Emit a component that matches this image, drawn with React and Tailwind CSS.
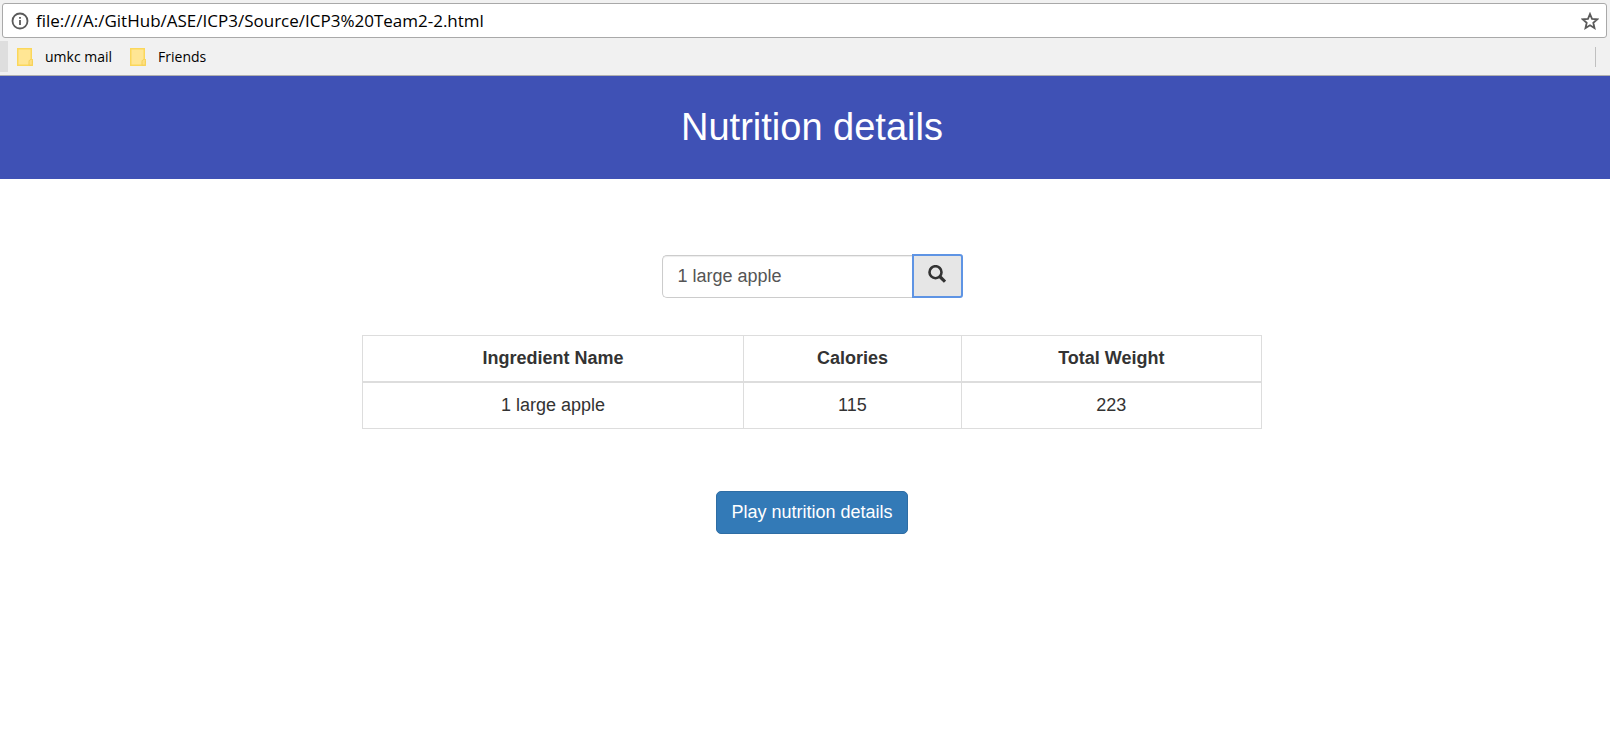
import { useState } from "react";

const rows = [{ name: "1 large apple", calories: 115, weight: 223 }];

function FolderIcon() {
  return (
    <svg className="h-[18px] w-4 shrink-0" viewBox="0 0 16 18" aria-hidden="true">
      <path d="M.75.75h13.500v11h1v5.500H.75z" fill="#ffe694" stroke="#fbd75b" strokeWidth="1.500" />
      <path d="M14.500 11.500c-1.500 0-2.500.8-2.500 2.200v3.500h2c1 0 1.300-.5 1.300-1.500v-3" fill="#ffe082" stroke="#f3cf58" />
    </svg>
  );
}

function BrowserBar() {
  return (
    <div className="border-b border-[#b0b0b0] bg-[#f1f1f1] text-black">
      <div className="px-0.5 pt-[3px]">
        <div className="mr-px flex h-[35px] items-center rounded-[3px] border border-[#a9a9a9] bg-white pr-[7px] pl-2">
          <svg className="size-[18px] shrink-0" viewBox="0 0 18 18" aria-hidden="true">
            <circle cx="9" cy="9" r="7.500" fill="none" stroke="#5a5a5a" strokeWidth="1.800" />
            <path d="M9 8v5M9 5v1.800" stroke="#5a5a5a" strokeWidth="1.800" />
          </svg>
          <input
            aria-label="Address"
            type="text"
            defaultValue="file:///A:/GitHub/ASE/ICP3/Source/ICP3%20Team2-2.html"
            className="ml-[7px] min-w-0 flex-1 bg-transparent font-['Open_Sans','Noto_Sans',sans-serif] text-[17px] leading-6 outline-none"
          />
          <button type="button" aria-label="Bookmark this page">
            <svg className="size-[18px]" viewBox="0 0 18 18" aria-hidden="true">
              <path
                d="M9 2l2 4.900 5.300.4-4 3.500 1.200 5.200L9 13.200 4.500 16l1.200-5.200-4-3.500 5.300-.4z"
                fill="none"
                stroke="#5a5a5a"
                strokeWidth="1.800"
              />
            </svg>
          </button>
        </div>
      </div>
      <nav className="flex h-[37px] items-center pr-[14px] font-['Open_Sans','Noto_Sans',sans-serif] text-[14px] leading-5">
        <div className="h-[31px] w-2 bg-[#dedede]" />
        <a href="#mail" className="ml-[9px] flex items-center gap-3">
          <FolderIcon />
          umkc mail
        </a>
        <a href="#friends" className="ml-[18px] flex items-center gap-3">
          <FolderIcon />
          Friends
        </a>
        <div className="ml-auto h-5 w-px bg-[#c0c0c0]" />
      </nav>
    </div>
  );
}

export default function App() {
  const [query, setQuery] = useState("1 large apple");
  return (
    <div className="min-h-screen bg-white font-['Liberation_Sans',Arial,sans-serif] text-[18px] leading-[25px] text-[#333]">
      <BrowserBar />
      <header className="bg-[#3f51b5] py-[30px] pl-[14px] text-center text-white">
        <h1 className="text-[38px] leading-[43px]">Nutrition details</h1>
      </header>
      <main className="flex flex-col items-center pt-[75px] pl-[14px]">
        <form className="flex h-11 w-[301px] items-center" onSubmit={(e) => e.preventDefault()}>
          <input
            aria-label="Food"
            type="text"
            value={query}
            onChange={(e) => setQuery(e.target.value)}
            className="h-[43px] min-w-0 flex-1 rounded-l-[5px] border border-r-0 border-[#ccc] px-[15px] text-[#555] shadow-[inset_0_1px_1px_rgba(0,0,0,0.075)] outline-none"
          />
          <button
            type="submit"
            aria-label="Search"
            className="flex h-11 w-[51px] items-start justify-center rounded-r-[3px] border-2 border-[#5e94e4] bg-[#e6e6e6] pt-[9px]"
          >
            <svg className="size-[18px]" viewBox="0 0 18 18" aria-hidden="true">
              <circle cx="7.500" cy="7.200" r="6" fill="none" stroke="#333" strokeWidth="2.600" />
              <path d="M11.800 11.500L17 16.700" stroke="#333" strokeWidth="3.200" />
            </svg>
          </button>
        </form>
        <table className="mt-[37px] w-full max-w-[900px] table-fixed border-collapse border border-[#ddd] text-center">
          <colgroup>
            <col className="w-[42.4%]" />
            <col className="w-[24.2%]" />
            <col />
          </colgroup>
          <thead>
            <tr>
              <th className="border border-b-2 border-[#ddd] p-2.5 font-bold">Ingredient Name</th>
              <th className="border border-b-2 border-[#ddd] p-2.5 font-bold">Calories</th>
              <th className="border border-b-2 border-[#ddd] p-2.5 font-bold">Total Weight</th>
            </tr>
          </thead>
          <tbody>
            {rows.map((row) => (
              <tr key={row.name}>
                <td className="border border-[#ddd] p-2.5">{row.name}</td>
                <td className="border border-[#ddd] p-2.5">{row.calories}</td>
                <td className="border border-[#ddd] p-2.5">{row.weight}</td>
              </tr>
            ))}
          </tbody>
        </table>
        <button
          type="button"
          className="mt-[62px] h-[43px] rounded-[5px] border border-[#2e6da4] bg-[#337ab7] px-[14px] text-white"
        >
          Play nutrition details
        </button>
      </main>
    </div>
  );
}
